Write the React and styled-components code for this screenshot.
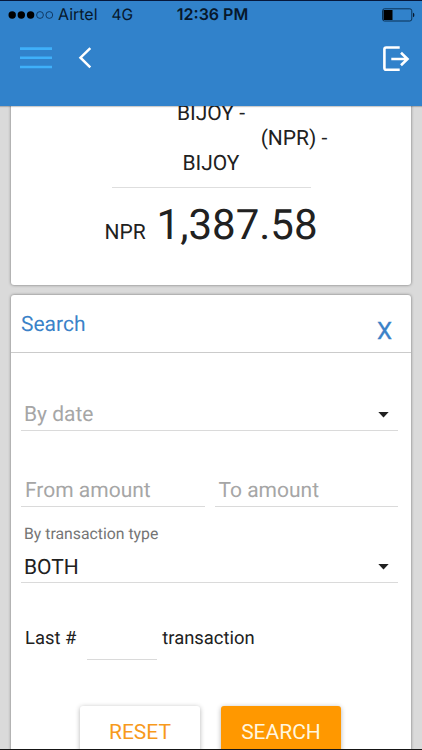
import React from "react";
import styled, { createGlobalStyle } from "styled-components";

const GlobalStyle = createGlobalStyle`
  * {
    box-sizing: border-box;
  }
  body {
    margin: 0;
    background: #dadada;
    font-family: Roboto, "Liberation Sans", sans-serif;
    color: #212121;
    text-rendering: geometricPrecision;
  }
`;

const Screen = styled.div`
  display: flex;
  flex-direction: column;
  width: 422px;
  height: 750px;
  overflow: hidden;
  background: #dadada;
  border-top: 1px solid #06183c;
  border-bottom: 1px solid #151515;
`;

const Header = styled.header`
  position: relative;
  z-index: 1;
  flex: none;
  height: 105px;
  background: #3182cb;
  box-shadow: 0 1px 1px rgba(0, 0, 0, 0.2);
`;

const StatusBar = styled.div`
  display: grid;
  grid-template-columns: 1fr auto 1fr;
  align-items: center;
  height: 27px;
  padding: 0 7px 0 8px;
  font-family: Inter, "Liberation Sans", sans-serif;
  font-size: 16px;
  line-height: 27px;
  color: #07182b;
`;

const Carrier = styled.div`
  display: flex;
  align-items: center;
`;

const CarrierName = styled.span`
  margin-left: 4px;
`;

const Network = styled.span`
  margin-left: 14px;
  font-size: 15.5px;
`;

const Clock = styled.span`
  margin-left: 2px;
  font-weight: 600;
  font-size: 16px;
`;

const Battery = styled.svg`
  justify-self: end;
`;

const Toolbar = styled.div`
  display: flex;
  align-items: center;
  height: 60px;
  padding: 0 12px 0 20px;
`;

const IconButton = styled.button`
  display: flex;
  padding: 0;
  border: none;
  background: none;
  margin-left: ${({ $left }) => $left || 0};
`;

const Main = styled.main`
  display: flex;
  flex-direction: column;
  gap: 10px;
  flex: 1;
  min-height: 0;
  overflow: hidden;
  padding: 0 11px;
`;

const Card = styled.section`
  flex: none;
  background: #fff;
  border-radius: 3px;
  box-shadow: 0 0 3px rgba(0, 0, 0, 0.5);
`;

const BalanceCard = styled(Card)`
  height: 199px;
  margin-top: -20px;
  padding-top: 16px;
`;

const AccountLine = styled.div`
  font-size: 21px;
  line-height: 25px;
  text-align: center;
  padding-left: ${({ $indent }) => $indent || "0"};
`;

const Divider = styled.div`
  width: 199px;
  height: 1px;
  margin: 10px auto 0;
  background: #dedede;
`;

const Amount = styled.div`
  display: flex;
  align-items: baseline;
  justify-content: center;
  gap: 11px;
  margin-top: 13px;
  line-height: 50px;
`;

const Currency = styled.span`
  font-size: 21px;
`;

const Value = styled.span`
  font-size: 42px;
`;

const SearchCard = styled(Card)`
  height: 520px;
`;

const CardHeader = styled.div`
  display: flex;
  justify-content: space-between;
  height: 58px;
  padding: 18px 19px 0 10px;
  border-bottom: 1px solid #cbcbcb;
  color: #3b82c8;
`;

const Title = styled.h2`
  margin: 0;
  font-size: 21px;
  font-weight: 400;
  line-height: 25px;
`;

const Close = styled.button`
  height: 25px;
  margin-top: 6px;
  padding: 0;
  border: none;
  background: none;
  color: inherit;
  font-family: inherit;
  font-size: 24px;
  -webkit-text-stroke: 0.3px currentColor;
  line-height: 25px;
`;

const Form = styled.form`
  padding: 0 13px 0 10px;
`;

const Field = styled.div`
  display: flex;
  align-items: flex-start;
  justify-content: space-between;
  flex: ${({ $grow }) => ($grow ? "1" : "none")};
  height: 30px;
  padding: 0 9px 0 ${({ $left }) => $left || "3px"};
  border-bottom: 1px solid #dadada;
  font-size: 21px;
  line-height: ${({ $filled }) => ($filled ? "30px" : "28px")};
  color: ${({ $filled }) => ($filled ? "#212121" : "#a6a6a6")};
  margin-top: ${({ $top }) => $top || "0"};
`;

const Arrow = styled.svg`
  margin-top: 11px;
`;

const Row = styled.div`
  display: flex;
  gap: 10px;
  margin-top: 46px;
`;

const Label = styled.div`
  margin-top: 18px;
  padding-left: 3px;
  font-size: 15.8px;
  line-height: 18px;
  color: #757575;
`;

const LastRow = styled.div`
  display: flex;
  height: 40px;
  margin-top: 36px;
  padding-left: 4px;
  font-size: 18.4px;
  line-height: 40px;
`;

const CountInput = styled.div`
  width: 70px;
  height: 41px;
  margin: 0 5px 0 11px;
  border-bottom: 1px solid #dadada;
`;

const Actions = styled.div`
  display: flex;
  gap: 21px;
  margin-top: 47px;
  padding-left: 59px;
`;

const Button = styled.button`
  width: 120px;
  height: 50px;
  padding: 2px 0 0;
  border: none;
  border-radius: 3px;
  font-family: inherit;
  font-size: 21px;
  line-height: 48px;
  background: ${({ $primary }) => ($primary ? "#ff9800" : "#fff")};
  color: ${({ $primary }) => ($primary ? "#fff6df" : "#f79a1c")};
  box-shadow: 0 1px 5px rgba(0, 0, 0, 0.3);
`;

const DropdownArrow = () => (
  <Arrow width="11" height="6" viewBox="0 0 11 6">
    <path d="M0.3 0H10.7L5.5 5.6Z" fill="#212121" />
  </Arrow>
);

const Status = () => (
  <StatusBar>
    <Carrier>
      <svg width="46" height="10" viewBox="0 0 46 10">
        <g fill="#000">
          <circle cx="4.2" cy="5" r="3.7" />
          <circle cx="13.3" cy="5" r="3.7" />
          <circle cx="22.6" cy="5" r="3.7" />
        </g>
        <g fill="none" stroke="#07284b" strokeWidth="0.8">
          <circle cx="32" cy="5" r="3.4" />
          <circle cx="41.3" cy="5" r="3.4" />
        </g>
      </svg>
      <CarrierName>Airtel</CarrierName>
      <Network>4G</Network>
    </Carrier>
    <Clock>12:36 PM</Clock>
    <Battery width="33" height="14" viewBox="0 0 33 14">
      <rect x="0.5" y="0.8" width="29.3" height="12.2" rx="2" fill="none" stroke="#0b3154" />
      <rect x="1.5" y="2" width="9" height="10" fill="#000" />
      <path d="M31 4.8Q32.4 5 32.4 7T31 9.2Z" fill="#07182b" />
    </Battery>
  </StatusBar>
);

const App = () => {
  return (
    <>
      <GlobalStyle />
      <Screen>
        <Header>
          <Status />
          <Toolbar>
            <IconButton aria-label="menu">
              <svg width="32" height="22" viewBox="0 0 32 22">
                <path d="M0 1.6H32M0 10.8H32M0 20H32" stroke="#3fb0fa" strokeWidth="2.6" />
              </svg>
            </IconButton>
            <IconButton aria-label="back" $left="26px">
              <svg width="14" height="22" viewBox="0 0 14 22">
                <path d="M12.3 1.2L2.5 10.7L12.3 20.3" fill="none" stroke="#fff" strokeWidth="2.5" />
              </svg>
            </IconButton>
            <IconButton aria-label="logout" $left="auto">
              <svg width="28" height="28" viewBox="0 0 28 28">
                <g fill="none" stroke="#fff" strokeWidth="2.6">
                  <path d="M17.7 3.5H4.2Q2.4 3.5 2.4 5.3V24Q2.4 25.8 4.2 25.8H17.7" />
                  <path d="M9.3 15H26M19 8.7L25.5 15L19 21.3" />
                </g>
              </svg>
            </IconButton>
          </Toolbar>
        </Header>

        <Main>
          <BalanceCard>
            <AccountLine>BIJOY -</AccountLine>
            <AccountLine $indent="166px">(NPR) -</AccountLine>
            <AccountLine>BIJOY</AccountLine>
            <Divider />
            <Amount>
              <Currency>NPR</Currency>
              <Value>1,387.58</Value>
            </Amount>
          </BalanceCard>

          <SearchCard>
            <CardHeader>
              <Title>Search</Title>
              <Close>X</Close>
            </CardHeader>
            <Form>
              <Field $top="48px">
                By date
                <DropdownArrow />
              </Field>
              <Row>
                <Field $grow $left="4px">
                  From amount
                </Field>
                <Field $grow $left="4px">
                  To amount
                </Field>
              </Row>
              <Label>By transaction type</Label>
              <Field $filled $top="10px">
                BOTH
                <DropdownArrow />
              </Field>
              <LastRow>
                Last #
                <CountInput />
                transaction
              </LastRow>
              <Actions>
                <Button type="button">RESET</Button>
                <Button type="button" $primary>
                  SEARCH
                </Button>
              </Actions>
            </Form>
          </SearchCard>
        </Main>
      </Screen>
    </>
  );
};

export default App;
